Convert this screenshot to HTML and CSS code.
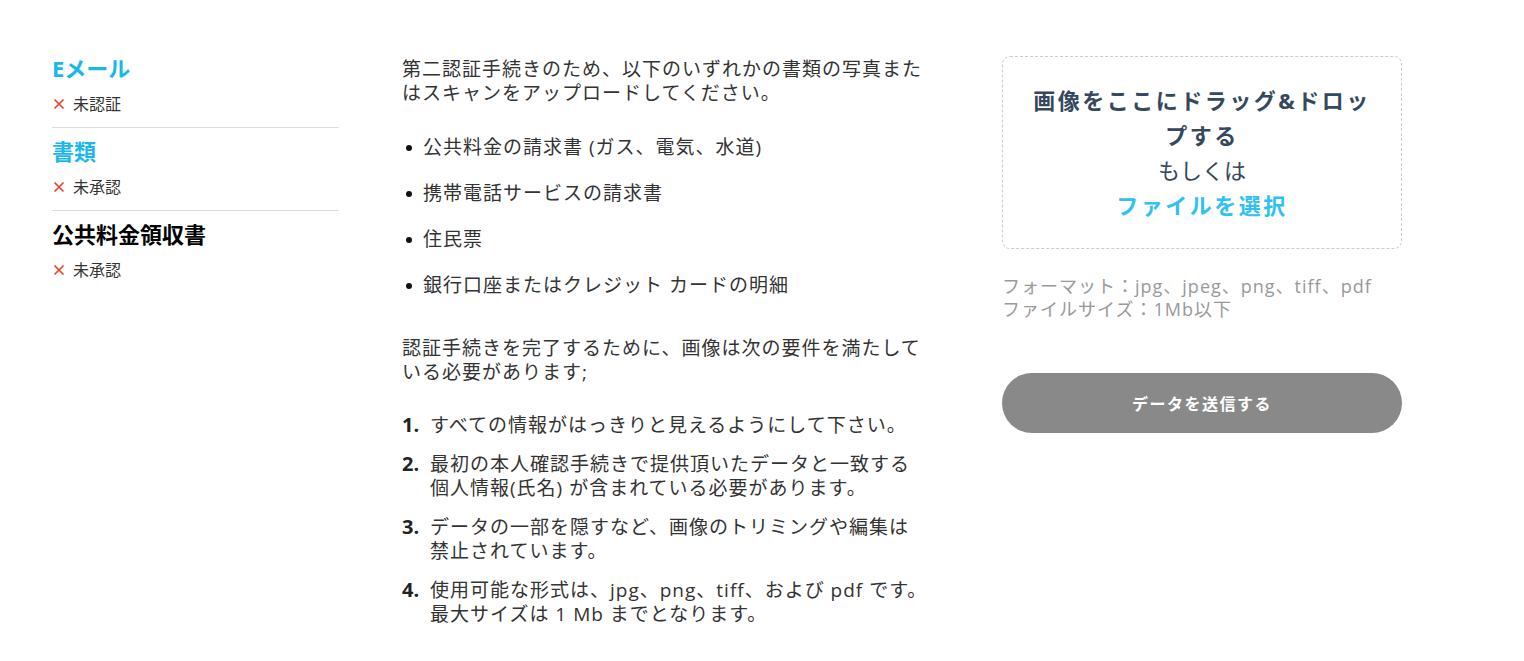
FILE: index.html
```html
<!DOCTYPE html>
<html lang="ja">
<head>
<meta charset="utf-8">
<title>認証</title>
<link rel="stylesheet" href="styles.css">
</head>
<body>
<div class="page">
  <aside class="steps">
    <section class="step">
      <h3 class="step-title active">Eメール</h3>
      <div class="step-status"><svg class="x" viewBox="0 0 12 12" width="12" height="12"><path d="M1.5 1.5L10.5 10.5M10.5 1.5L1.5 10.5" stroke="#f0412f" stroke-width="1.7" fill="none"/></svg>未認証</div>
    </section>
    <section class="step">
      <h3 class="step-title active">書類</h3>
      <div class="step-status"><svg class="x" viewBox="0 0 12 12" width="12" height="12"><path d="M1.5 1.5L10.5 10.5M10.5 1.5L1.5 10.5" stroke="#f0412f" stroke-width="1.7" fill="none"/></svg>未承認</div>
    </section>
    <section class="step last">
      <h3 class="step-title">公共料金領収書</h3>
      <div class="step-status"><svg class="x" viewBox="0 0 12 12" width="12" height="12"><path d="M1.5 1.5L10.5 10.5M10.5 1.5L1.5 10.5" stroke="#f0412f" stroke-width="1.7" fill="none"/></svg>未承認</div>
    </section>
  </aside>

  <main class="info">
    <p class="para">第二認証手続きのため、以下のいずれかの書類の写真またはスキャンをアップロードしてください。</p>
    <ul class="bullets">
      <li>公共料金の請求書 (ガス、電気、水道)</li>
      <li>携帯電話サービスの請求書</li>
      <li>住民票</li>
      <li>銀行口座またはクレジット カードの明細</li>
    </ul>
    <p class="para para2">認証手続きを完了するために、画像は次の要件を満たしている必要があります;</p>
    <ol class="reqs">
      <li><span class="num">1.</span><span class="txt">すべての情報がはっきりと見えるようにして下さい。</span></li>
      <li><span class="num">2.</span><span class="txt">最初の本人確認手続きで提供頂いたデータと一致する個人情報(氏名) が含まれている必要があります。</span></li>
      <li><span class="num">3.</span><span class="txt">データの一部を隠すなど、画像のトリミングや編集は禁止されています。</span></li>
      <li><span class="num">4.</span><span class="txt">使用可能な形式は、jpg、png、tiff、および pdf です。最大サイズは 1 Mb までとなります。</span></li>
    </ol>
  </main>

  <div class="upload">
    <div class="drop">
      <div class="drop-title">画像をここにドラッグ&amp;ドロップする</div>
      <div class="drop-or">もしくは</div>
      <div class="drop-pick">ファイルを選択</div>
    </div>
    <div class="formats">
      <div>フォーマット：jpg、jpeg、png、tiff、pdf</div>
      <div>ファイルサイズ：1Mb以下</div>
    </div>
    <button class="submit" type="button">データを送信する</button>
  </div>
</div>
</body>
</html>
```

FILE: styles.css
```css
* { box-sizing: border-box; }

body {
  margin: 0;
  background: #ffffff;
  font-family: "Open Sans", "Noto Sans CJK JP", sans-serif;
  color: #333333;
}

.page {
  display: flex;
  align-items: flex-start;
  padding: 45px 0 0 52px;
}

/* left steps */
.steps {
  width: 287px;
  flex: none;
}

.step {
  padding: 9px 0 13px;
  border-bottom: 1px solid #dddddd;
}

.step.last { border-bottom: none; }

.step-title {
  margin: 0;
  font-size: 22px;
  line-height: 28px;
  font-weight: 700;
  color: #000000;
}

.step-title.active { color: #19b8ec; }

.step-status {
  margin-top: 12px;
  font-size: 16px;
  line-height: 20px;
  color: #333333;
  display: flex;
  align-items: center;
}

.x {
  flex: none;
  margin: 0 8px 0 1px;
}

/* middle info */
.info {
  width: 526px;
  flex: none;
  margin-left: 63px;
  margin-top: 12px;
  font-size: 19px;
  letter-spacing: 1px;
  line-height: 24px;
  color: #333333;
}

.para { margin: 0; }
.para2 { margin-top: 39px; }

.bullets {
  margin: 30px 0 0;
  padding: 0 0 0 21px;
  list-style: none;
}

.bullets li {
  position: relative;
  margin-bottom: 22px;
}

.bullets li:last-child { margin-bottom: 0; }

.bullets li::before {
  content: "";
  position: absolute;
  left: -17px;
  top: 10px;
  width: 6px;
  height: 6px;
  border-radius: 50%;
  background: #111111;
}

.reqs {
  margin: 29px 0 0;
  padding: 0;
  list-style: none;
}

.reqs li {
  display: flex;
  margin-bottom: 15px;
}

.num {
  flex: none;
  width: 28px;
  font-weight: 700;
  font-size: 20px;
  letter-spacing: 0;
  color: #222222;
}

.txt { flex: 1; }

/* right upload */
.upload {
  width: 400px;
  flex: none;
  margin-left: 74px;
  margin-top: 11px;
}

.drop {
  border: 1px dashed #cccccc;
  border-radius: 8px;
  padding: 26px 26px 25px;
  text-align: center;
  font-size: 22px;
  line-height: 35px;
}

.drop-title {
  font-weight: 700;
  color: #34495e;
  letter-spacing: 2.5px;
}

.drop-or {
  color: #34495e;
}

.drop-pick {
  font-weight: 700;
  color: #2fc1f2;
  letter-spacing: 2.5px;
}

.formats {
  margin-top: 26px;
  font-size: 18px;
  line-height: 23px;
  letter-spacing: 1px;
  color: #999999;
}

.submit {
  display: block;
  width: 100%;
  height: 60px;
  margin-top: 52px;
  border: none;
  border-radius: 30px;
  background: #898989;
  color: #ffffff;
  font-family: "Open Sans", "Noto Sans CJK JP", sans-serif;
  font-size: 16px;
  font-weight: 700;
  letter-spacing: 1.5px;
}
```
